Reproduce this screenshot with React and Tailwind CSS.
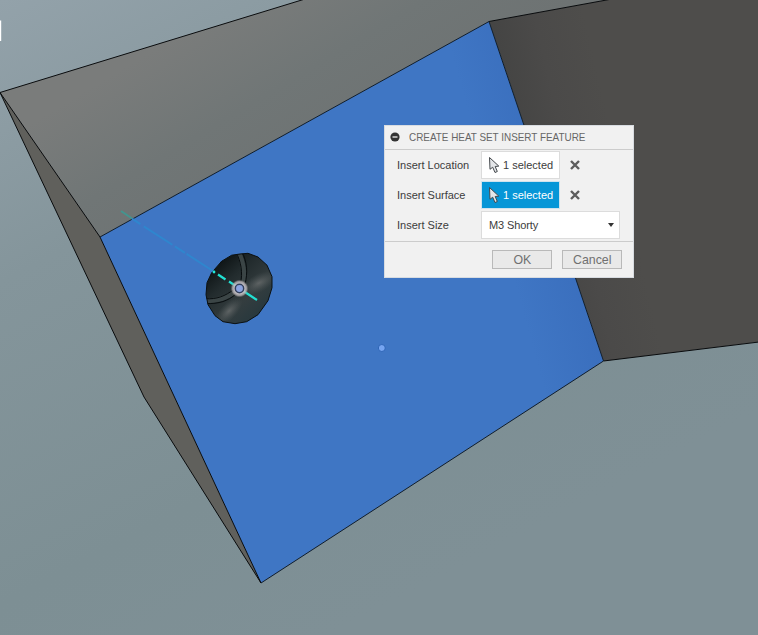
import React from "react";

function Scene() {
  return (
    <svg className="block h-full w-full" viewBox="0 0 758 635" fill="none">
      <defs>
        <linearGradient id="sky" x1="0" y1="0" x2="330" y2="635" gradientUnits="userSpaceOnUse">
          <stop offset="0" stopColor="#93a2aa" />
          <stop offset="0.35" stopColor="#84959b" />
          <stop offset="0.75" stopColor="#7d8f94" />
          <stop offset="1" stopColor="#7f9096" />
        </linearGradient>
        <linearGradient id="top" x1="170" y1="40" x2="260" y2="190" gradientUnits="userSpaceOnUse">
          <stop offset="0" stopColor="#7a7c7b" />
          <stop offset="0.55" stopColor="#707676" />
          <stop offset="1" stopColor="#6e7373" />
        </linearGradient>
        <linearGradient id="face" x1="500" y1="230" x2="580" y2="208" gradientUnits="userSpaceOnUse">
          <stop offset="0" stopColor="#3f76c4" />
          <stop offset="1" stopColor="#396dbc" />
        </linearGradient>
        <linearGradient id="wall" x1="525" y1="190" x2="620" y2="168" gradientUnits="userSpaceOnUse">
          <stop offset="0" stopColor="#444443" />
          <stop offset="0.5" stopColor="#4b4a49" />
          <stop offset="1" stopColor="#4e4d4b" />
        </linearGradient>
        <linearGradient id="bore" x1="216" y1="262" x2="264" y2="316" gradientUnits="userSpaceOnUse">
          <stop offset="0" stopColor="#0c1213" />
          <stop offset="0.3" stopColor="#222b2d" />
          <stop offset="0.65" stopColor="#343d3f" />
          <stop offset="1" stopColor="#25373d" />
        </linearGradient>
        <radialGradient id="glow">
          <stop offset="0.5" stopColor="#d6d2d8" />
          <stop offset="0.8" stopColor="#b4afb2" stopOpacity="0.75" />
          <stop offset="1" stopColor="#777" stopOpacity="0" />
        </radialGradient>
        <radialGradient id="sheen">
          <stop offset="0" stopColor="#7c7e7e" stopOpacity="0.6" />
          <stop offset="1" stopColor="#596264" stopOpacity="0" />
        </radialGradient>
        <clipPath id="holeClip">
          <path d="M240 254l8-.7 10 3.700 9 8.200 5 11.500v11l-4 13-10 14-11.300 7-11.700 2-12-2-8-6-7-11-2-10 1-12 4.700-10 10-11.500 10-6z" />
        </clipPath>
      </defs>
      <rect width="758" height="635" fill="url(#sky)" />
      <path d="M0 92.5L305-1H612L489 21.5 100 237z" fill="url(#top)" />
      <path d="M0 92.5L100 237l161 346L144 397z" fill="#60605c" />
      <path d="M489 21.5L612-1h147v343L603.500 361z" fill="url(#wall)" />
      <path d="M100 237L489 21.500 603.500 361 261 583z" fill="url(#face)" />
      <g stroke="#090b0d" strokeWidth="1">
        <path d="M0 92.500L305-1M489 21.500L612-1M0 92.500L100 237 261 583 144 397zM603.500 361L759 342" />
        <path d="M100 237L489 21.500 603.500 361 261 583" stroke="#101d2b" />
      </g>
      <path d="M0 20.500h1.200v20.500H0z" fill="#fff" />
      <g clipPath="url(#holeClip)">
        <path d="M204 250h71v75h-71z" fill="url(#bore)" />
        <ellipse cx="229" cy="311" rx="17" ry="8" transform="rotate(-45 229 311)" fill="url(#sheen)" />
        <ellipse cx="259" cy="283" rx="19" ry="9" transform="rotate(-28 259 283)" fill="url(#sheen)" />
        <path d="M238.500 252C243 262 245 272 243 284M205 301C218 301 227 298 236 291" stroke="#3b4546" strokeWidth="5" />
        <path d="M236 252C241 262 243 272 240.500 284M242 252C247 262 248 272 245 284M205 298.700C217 299.500 225 296 234 289.500M206 303.500C219 304 228 301 236 294" stroke="#080d0f" />
      </g>
      <path d="M240 254l8-.7 10 3.700 9 8.200 5 11.500v11l-4 13-10 14-11.300 7-11.700 2-12-2-8-6-7-11-2-10 1-12 4.700-10 10-11.500 10-6z" stroke="#0b1011" />
      <path d="M121 211l11 7.500" stroke="#43958f" strokeWidth="2" />
      <path d="M132 218.700l81 52.300" stroke="#2f86ce" strokeWidth="2" strokeDasharray="10 4 34 3 12 2 40" />
      <circle cx="214" cy="272" r="1.400" fill="#22e9d9" />
      <path d="M218 274.500l7.500 5M229 281.500l28 18.500" stroke="#22dfd2" strokeWidth="2.200" />
      <circle cx="239.500" cy="288.500" r="9" fill="url(#glow)" />
      <circle cx="239.500" cy="288.500" r="4.200" fill="#8ba3df" stroke="#34405d" strokeWidth="1.500" />
      <circle cx="381.800" cy="348" r="3.500" fill="#76a5f1" stroke="#2e65b6" />
    </svg>
  );
}

function Cursor() {
  return (
    <svg className="h-[18px] w-3 shrink-0" viewBox="0 0 12 18">
      <path d="M1.500 1.500L2 13.300l2.700-2.100L7 16.500l2.300-1L7.200 10.500l3.600-.4z" fill="#e4e6e9" stroke="#44484c" strokeWidth="1" strokeLinejoin="round" />
    </svg>
  );
}

function Selection({ label, active = false }) {
  return (
    <div className="flex h-[30px] items-center">
      <span className="w-[84px]">{label}</span>
      <button className={`flex h-[28px] w-[79px] items-center border pl-[6px] ${active ? "border-[#cfe3ee] bg-[#0696d7] text-white" : "border-[#dcdcdc] bg-white"}`}>
        <Cursor />
        <span className="ml-[3px] whitespace-nowrap">1 selected</span>
      </button>
      <button aria-label={`Clear ${label}`} className="ml-[10px]">
        <svg className="h-[10px] w-[10px]" viewBox="0 0 10 10">
          <path d="M1 1l8 8M9 1L1 9" stroke="#5d5d5d" strokeWidth="2.400" />
        </svg>
      </button>
    </div>
  );
}

export default function App() {
  return (
    <main className="relative h-[635px] w-[758px] overflow-hidden font-['Liberation_Sans',Arial,sans-serif] text-[11px] leading-[14px] text-[#3c3c3c]">
      <Scene />
      <section className="absolute left-[384px] top-[125px] flex h-[153px] w-[250px] flex-col border border-[#d8dce1] bg-[#f1f1f1]">
        <header className="flex h-6 items-center border-b border-[#cccccc] pb-px pl-[5px] text-[#666]">
          <svg className="h-[10px] w-[10px]" viewBox="0 0 10 10">
            <circle cx="5" cy="5" r="4.600" fill="#333" />
            <path d="M2.500 5h5" stroke="#f1f1f1" strokeWidth="1.300" />
          </svg>
          <span className="ml-[9px] inline-block origin-left scale-x-[0.9] whitespace-nowrap">CREATE HEAT SET INSERT FEATURE</span>
        </header>
        <div className="h-[92px] border-b border-[#cccccc] pl-3">
          <Selection label="Insert Location" />
          <Selection label="Insert Surface" active />
          <div className="flex h-[30px] items-center">
            <span className="w-[84px]">Insert Size</span>
            <button className="flex h-[28px] w-[139px] items-center justify-between border border-[#dcdcdc] bg-white pl-[7px] pr-[5px]">
              <span className="tracking-[-0.1px]">M3 Shorty</span>
              <svg className="h-1 w-[6px]" viewBox="0 0 6 4"><path d="M0 0h6L3 4z" fill="#333" /></svg>
            </button>
          </div>
        </div>
        <footer className="flex flex-1 items-center justify-end gap-[10px] pr-[11px] text-[13px] text-[#707070]">
          <button className="h-[19px] w-[60px] border border-[#b9b9b9] bg-[#e9e9e9] leading-[17px]"><span className="inline-block scale-x-[0.95]">OK</span></button>
          <button className="h-[19px] w-[60px] border border-[#b9b9b9] bg-[#e9e9e9] leading-[17px]"><span className="inline-block scale-x-[0.95]">Cancel</span></button>
        </footer>
      </section>
    </main>
  );
}
